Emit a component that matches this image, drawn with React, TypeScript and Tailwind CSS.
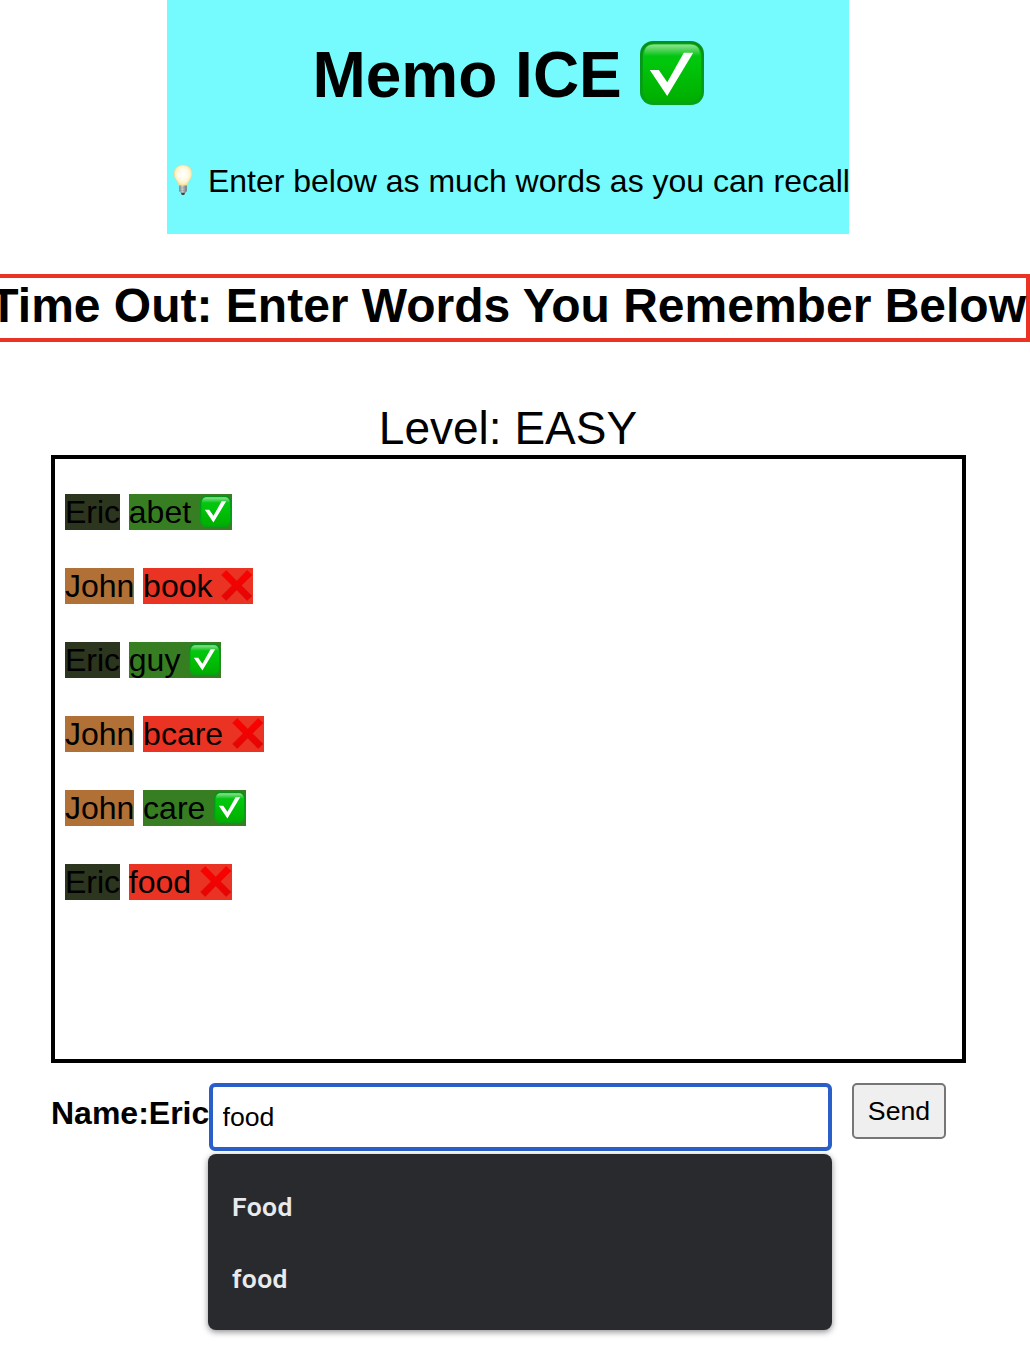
import { useId } from "react";

function CheckEmoji({ className, viewBox = "0 0 64 64" }: { className: string; viewBox?: string }) {
  const id = useId();
  return (
    <svg viewBox={viewBox} className={className} aria-label="correct">
      <defs>
        <linearGradient id={id + "b"} x1="0" y1="0" x2="0" y2="1">
          <stop offset="0" stopColor="#0bc018" />
          <stop offset="0.3" stopColor="#00c70c" />
          <stop offset="1" stopColor="#00ae00" />
        </linearGradient>
        <linearGradient id={id + "e"} x1="0" y1="0" x2="0" y2="1">
          <stop offset="0" stopColor="#07901a" />
          <stop offset="1" stopColor="#05a318" />
        </linearGradient>
        <linearGradient id={id + "g"} x1="0" y1="0" x2="0" y2="1">
          <stop offset="0" stopColor="#fff" stopOpacity="0.55" />
          <stop offset="1" stopColor="#fff" stopOpacity="0" />
        </linearGradient>
      </defs>
      <rect width="64" height="64" rx="13" fill={`url(#${id}e)`} />
      <rect x="2.8" y="2.8" width="58.4" height="58.4" rx="10.5" fill={`url(#${id}b)`} />
      <path d="M4 15C4 7 7 3.4 14 3.4H50C57 3.4 60 7 60 15Z" fill={`url(#${id}g)`} />
      <path d="M9.8 29H18.8L27.3 41.3L43.8 11.8H53.2L27.2 55Z" fill="#fff" />
    </svg>
  );
}

function CrossEmoji({ className }: { className: string }) {
  const id = useId();
  return (
    <svg viewBox="0 0.6 32 32" className={className} aria-label="wrong">
      <defs>
        <linearGradient id={id + "x"} x1="0" y1="0" x2="0" y2="1">
          <stop offset="0" stopColor="#ff0000" />
          <stop offset="1" stopColor="#e30505" />
        </linearGradient>
      </defs>
      <path
        d="M5.3 0.9L15.7 11.5L26.1 0.9L31.1 5.5L20.5 16L31.1 26.5L26.1 31.3L15.7 20.7L5.3 31.3L0.5 26.5L11 16L0.5 5.5Z"
        fill={`url(#${id}x)`}
        stroke="#cf1712"
        strokeWidth="0.35"
      />
    </svg>
  );
}

function BulbEmoji({ className }: { className: string }) {
  return (
    <svg viewBox="0 0 32 32" className={className} aria-label="hint">
      <defs>
        <radialGradient id="bulb-glass" cx="0.5" cy="0.45" r="0.55">
          <stop offset="0" stopColor="#ffffff" />
          <stop offset="0.5" stopColor="#fffbe9" />
          <stop offset="0.8" stopColor="#fdeeb8" />
          <stop offset="1" stopColor="#efd88d" />
        </radialGradient>
        <linearGradient id="bulb-base" x1="0" y1="0" x2="1" y2="0">
          <stop offset="0" stopColor="#777b7c" />
          <stop offset="0.4" stopColor="#d2d3d3" />
          <stop offset="1" stopColor="#686b6c" />
        </linearGradient>
      </defs>
      <path
        d="M16 1C10.4 1 7 4.8 7 9.8C7 14.5 10.8 16.3 12.2 22H19.8C21.2 16.3 25 14.5 25 9.8C25 4.8 21.6 1 16 1Z"
        fill="url(#bulb-glass)"
        stroke="#efd58a"
        strokeWidth="0.5"
      />
      <path d="M12.2 21.5H19.8V27.2L18 29.1H14L12.2 27.2Z" fill="url(#bulb-base)" />
      <path d="M12.3 24.2L19.7 23.6M12.5 26.8L19.5 26.2" stroke="#8d9091" strokeWidth="0.5" />
      <path d="M13.8 28.8H18.2L17.2 31H14.8Z" fill="#3e4748" />
    </svg>
  );
}

const guesses = [
  { player: "Eric", word: "abet", correct: true },
  { player: "John", word: "book", correct: false },
  { player: "Eric", word: "guy", correct: true },
  { player: "John", word: "bcare", correct: false },
  { player: "John", word: "care", correct: true },
  { player: "Eric", word: "food", correct: false },
];

export default function App() {
  return (
    <div className="flex h-[1348px] w-[1030px] flex-col overflow-hidden bg-white font-['Liberation_Sans',Arial,sans-serif] text-black">
      <header className="ml-[167px] h-[234px] w-[682px] bg-[#75fbfd] pt-[39px]">
        <h1 className="flex h-[72px] justify-center whitespace-pre text-[64px] leading-[72px] font-bold">
          {"Memo ICE "}
          <CheckEmoji className="mt-0.5 size-16" />
        </h1>
        <p className="mt-[52px] flex h-9 whitespace-pre text-[32px] leading-9">
          <BulbEmoji className="mt-px size-8 shrink-0" />
          {" Enter below as much words as you can recall"}
        </p>
      </header>

      <h2 className="mt-10 flex h-[68px] shrink-0 justify-end border-y-4 border-r-4 border-[#eb3323] text-[48px] leading-[55px] font-bold whitespace-nowrap">
        Time Out: Enter Words You Remember Below
      </h2>

      <p className="mt-[60px] mr-[14px] h-[53px] text-center text-[46px] leading-[53px]">Level: EASY</p>

      <ul className="ml-[51px] flex h-[608px] w-[915px] shrink-0 flex-col gap-[38px] border-4 border-black px-2.5 pt-[35px] text-[32px] leading-9">
        {guesses.map((g, i) => (
          <li key={i} className="flex h-9 whitespace-pre">
            <span className={g.player === "Eric" ? "bg-[#2c351e]" : "bg-[#b07036]"}>{g.player}</span>
            <span className="-mr-[0.2px]"> </span>
            <span className={g.correct ? "flex bg-[#377e22]" : "flex bg-[#eb3323]"}>
              {g.word + " "}
              {g.correct ? (
                <CheckEmoji viewBox="0 1 65 65" className="mt-0.5 size-8" />
              ) : (
                <CrossEmoji className="mt-0.5 size-8" />
              )}
            </span>
          </li>
        ))}
      </ul>

      <form className="mt-5 ml-[51px] flex items-start" onSubmit={(e) => e.preventDefault()}>
        <label htmlFor="word" className="w-[158px] pt-3 text-[32px] leading-9 font-bold whitespace-nowrap">
          Name:Eric
        </label>
        <div className="relative">
          <input
            id="word"
            defaultValue="food"
            autoComplete="off"
            className="block h-[68px] w-[623px] rounded-[6px] border-4 border-[#2a5fc9] bg-white px-[9.5px] text-[26.67px] outline-none"
          />
          <ul className="absolute top-[71px] -left-px h-[176px] w-[624px] rounded-lg bg-[#292a2d] py-[17px] font-[Roboto,sans-serif] text-[26.5px] font-semibold tracking-[0.4px] text-[#e8eaed] shadow-[0_2px_6px_rgba(0,0,0,0.45)]">
            <li className="flex h-[72px] items-center px-6">Food</li>
            <li className="flex h-[72px] items-center px-6">food</li>
          </ul>
        </div>
        <button className="ml-5 h-14 w-[94px] rounded-[5px] border-2 border-[#767676] bg-[#efefef] text-[26.67px] leading-none">
          Send
        </button>
      </form>
    </div>
  );
}
